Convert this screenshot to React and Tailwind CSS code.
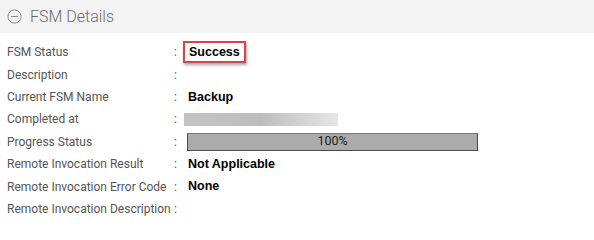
import React from "react";

const rows = [
  { label: "FSM Status", value: "Success", boxed: true },
  { label: "Description" },
  { label: "Current FSM Name", value: "Backup" },
  { label: "Completed at", blurred: true },
  { label: "Progress Status", progress: 100 },
  { label: "Remote Invocation Result", value: "Not Applicable" },
  { label: "Remote Invocation Error Code", value: "None" },
  { label: "Remote Invocation Description" },
];

const App = () => {
  return (
    <div className="w-[594px] h-[221px] bg-white overflow-hidden" style={{ fontFamily: 'Roboto, "Liberation Sans", sans-serif' }}>
      {/* header */}
      <div className="h-[33px] bg-[#f3f3f3] flex items-center pl-[7px] gap-[8px]">
        <svg width="15" height="15" viewBox="0 0 15 15">
          <circle cx="7.5" cy="7.5" r="6.6" fill="none" stroke="#8a8a8a" strokeWidth="1" />
          <line x1="4" y1="7.5" x2="11" y2="7.5" stroke="#8a8a8a" strokeWidth="1" />
        </svg>
        <span className="text-[16px] font-light text-[#6b6b6b]">FSM Details</span>
      </div>
      {/* rows */}
      <div className="pt-[8px]">
        {rows.map((r) => (
          <div key={r.label} className="h-[22.4px] flex items-center text-[12px] whitespace-nowrap">
            <div className="w-[174px] pl-[7px] text-[#555]">{r.label}</div>
            <div className="w-[8px] text-[#555]">:</div>
            <div className="flex-1 flex items-center text-[12.5px]" style={{ fontFamily: '"Liberation Sans", Arial, sans-serif' }}>
              {r.boxed && (
                <span className="ml-[1px] px-[4px] h-[22px] flex items-center border-2 border-[#d9434b] font-bold text-black shadow-[1px_2px_3px_rgba(0,0,0,0.35)]">
                  {r.value}
                </span>
              )}
              {!r.boxed && r.value && <span className="ml-[6px] font-bold text-black">{r.value}</span>}
              {r.blurred && (
                <div className="ml-[2px] w-[154px] h-[13px] bg-gradient-to-r from-[#c4c4c4] via-[#bdbdbd] to-[#e6e6e6] blur-[0.5px]" />
              )}
              {r.progress !== undefined && (
                <div
                  className="ml-[5px] w-[291px] h-[18px] bg-[#ababab] border border-[#4a4a4a] border-t-[#777] flex items-center justify-center text-[12.5px] text-[#222]"
                  style={{ fontFamily: 'Roboto, sans-serif' }}
                >
                  {r.progress}%
                </div>
              )}
            </div>
          </div>
        ))}
      </div>
    </div>
  );
};

export default App;
